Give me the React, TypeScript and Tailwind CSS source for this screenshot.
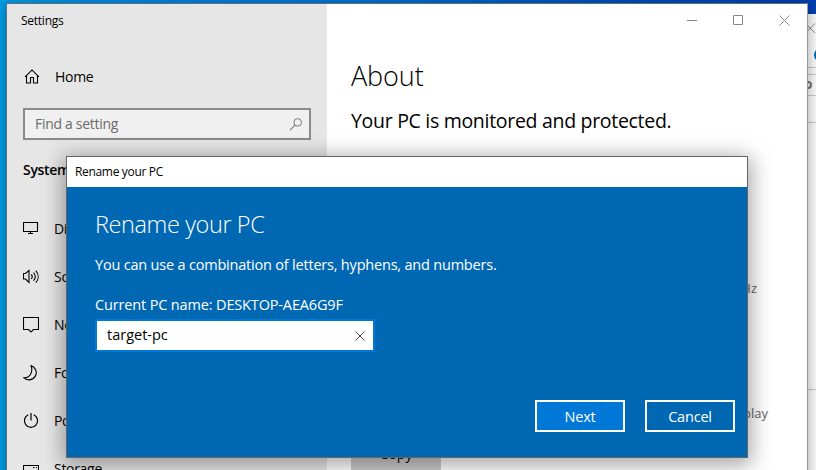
import type { ReactNode } from "react";

function Glyph({ size = 16, children, className = "" }: { size?: number; children: ReactNode; className?: string }) {
  return (
    <svg width={size} height={size} viewBox={`0 0 ${size} ${size}`} fill="none" stroke="currentColor" strokeWidth="1.2" className={`shrink-0 ${className}`}>
      {children}
    </svg>
  );
}

const navItems: { label: string; icon: ReactNode }[] = [
  {
    label: "Display",
    icon: <path d="M.5 1.500h14v9H.5zM5 12.500h5M7.500 10.500v2" strokeWidth="1.100" />,
  },
  {
    label: "Sound",
    icon: <path d="M.5 4.500h2L6 1.500v12l-3.500-3.500h-2zM8.200 5.500c1.200 1.200 1.200 3.200 0 4.500M10.500 3.700c2.200 2.400 2.200 5.600 0 8M12.800 1.700c3.200 3.600 3.200 8.400 0 12" strokeWidth="1.100" />,
  },
  {
    label: "Notifications & actions",
    icon: <path d="M.5.5h15v12h-5L8 15l-2.500-2.500H.5z" strokeWidth="1.100" />,
  },
  {
    label: "Focus assist",
    icon: <path d="M8 .6a7.300 7.300 0 1 1-7.300 12.100C6.500 13.200 10.500 7.500 8 .6z" strokeWidth="1.100" />,
  },
  {
    label: "Power & sleep",
    icon: <path d="M5.200 1.800a6.600 6.600 0 1 0 5.600 0M8 0v7.500" strokeWidth="1.200" />,
  },
  {
    label: "Storage",
    icon: <path d="M.5 4.500h15v9H.5zM10 6.500h1.500M13 6.500h1.500" strokeWidth="1.100" />,
  },
];

function Sidebar() {
  return (
    <aside className="flex w-[320px] shrink-0 flex-col bg-[#e6e6e6] text-sm tracking-[-0.3px]">
      <div className="flex h-[34px] items-center pl-[14px] text-[12px] tracking-[-0.25px]">Settings</div>
      <div className="mt-[22px] flex h-[34px] items-center gap-[15px] pl-[17px]">
        <Glyph>
          <path d="M1 7.800 8 .9l7 6.900M2.500 6.500v7.500h4V8.500h3V14h4V6.500" strokeWidth="1.100" />
        </Glyph>
        <span>Home</span>
      </div>
      <div className="mx-4 mt-[14px] flex h-8 items-center justify-between border-2 border-[#8a8a8a] bg-[#f0f0f0] pl-[10px] pr-[6px] text-[#6b6b6b]">
        <span className="-mt-px">Find a setting</span>
        <Glyph size={15} className="text-[#777]">
          <circle cx="9.700" cy="5.400" r="3.800" strokeWidth="1" />
          <path d="M7 8.200 2 13.200" strokeWidth="1.100" />
        </Glyph>
      </div>
      <div className="mt-[20px] flex h-[20px] items-center pl-4 font-semibold">System</div>
      <nav className="mt-[25px] flex flex-col">
        {navItems.map(({ label, icon }) => (
          <div key={label} className="flex h-12 shrink-0 items-center gap-[15px] pl-4">
            <Glyph>{icon}</Glyph>
            <span className="whitespace-nowrap">{label}</span>
          </div>
        ))}
      </nav>
    </aside>
  );
}

function About() {
  return (
    <main className="flex min-w-0 flex-1 flex-col bg-white">
      <div className="flex h-[32px] justify-end text-[#888]">
        {["M2 7.500h10", "M2.500 2.500h9v9h-9z", "m2.500 2.500 10 10m0-10-10 10"].map((d) => (
          <div key={d} className="flex w-[46px] items-center justify-center">
            <Glyph size={15}>
              <path d={d} strokeWidth="1" />
            </Glyph>
          </div>
        ))}
      </div>
      <h1 className="mt-[21px] pl-6 text-[27px] font-[340] leading-[38px] tracking-[-0.1px]">About</h1>
      <h2 className="mt-[12px] pl-6 text-[19.5px] leading-[28px] tracking-[-0.3px]">Your PC is monitored and protected.</h2>
      <div className="mt-[143px] flex h-5 justify-end pr-[50px] text-[13px] leading-5 text-[#666]">2.50 GHz</div>
      <div className="mt-[105px] flex h-5 justify-end pr-[39px] text-[13px] leading-5 text-[#666]">No pen or touch input is available for this display</div>
      <button className="ml-6 mt-[15px] h-8 w-[90px] shrink-0 bg-[#ccc] text-sm">Copy</button>
    </main>
  );
}

function RenameDialog() {
  return (
    <section className="absolute left-[66px] top-[156px] flex h-[302px] w-[682px] flex-col border border-[#666] bg-[#0067b3] text-[14.5px] tracking-[-0.2px] text-white shadow-[0_4px_20px_3px_rgba(0,0,0,0.36)]">
      <header className="flex h-[30px] shrink-0 items-center bg-white pl-2 text-[12px] tracking-[-0.33px] text-black">Rename your PC</header>
      <div className="flex flex-1 flex-col pl-7 pr-3">
        <h2 className="mt-[19px] text-[23.5px] font-[340] leading-9 tracking-[-0.4px]">Rename your PC</h2>
        <p className="mt-[13px] leading-5">You can use a combination of letters, hyphens, and numbers.</p>
        <p className="mt-5 leading-5 tracking-[-0.15px]">Current PC name: DESKTOP-AEA6G9F</p>
        <div className="mt-1 flex h-[33px] w-[280px] items-center justify-between border-2 border-[#0078d7] bg-white pl-[10px] pr-[6px] text-black">
          <span className="-mt-px leading-5 tracking-normal">target-pc</span>
          <Glyph size={15} className="text-[#444]">
            <path d="m3.500 3.500 9 9m0-9-9 9" strokeWidth="1" />
          </Glyph>
        </div>
        <div className="mt-[48px] flex justify-end gap-5">
          <button className="h-8 w-[90px] border-2 border-white bg-[#0078d7] pt-px leading-5">Next</button>
          <button className="h-8 w-[90px] border-2 border-white pt-px leading-5">Cancel</button>
        </div>
      </div>
    </section>
  );
}

function BackgroundWindow() {
  return (
    <div className="absolute left-[700px] top-[14px] flex h-[480px] w-[130px] flex-col bg-white pl-[104px]">
      <div className="flex h-[29px] items-center text-[#888]">
        <Glyph size={14}>
          <path d="m1.500 1.500 9.500 9.500m0-9.500-9.500 9.500" strokeWidth="1" />
        </Glyph>
      </div>
      <div className="h-[25px] border-b border-[#ccc] pl-[10px] pt-[5px]">
        <div className="size-[14px] rounded-full bg-[#0067b3]" />
      </div>
      <div className="h-[7px] border-b border-[#ccc]" />
      <div className="flex h-[21px] items-center border-b border-[#ccc]">
        <div className="size-2 rounded-full border-2 border-[#777]" />
      </div>
      <div className="h-[27px] border-b border-[#ccc]" />
      <div className="h-[267px] border-b border-[#ccc]" />
    </div>
  );
}

export default function App() {
  return (
    <div className="relative h-[470px] w-[816px] overflow-hidden bg-[linear-gradient(90deg,#00a2ed_0%,#008ee5_12%,#0078d7_43%,#0052bc_75%,#0040b4_100%)] font-['Open_Sans','Noto_Sans',sans-serif] text-black">
      <BackgroundWindow />
      <div className="absolute left-[6px] top-[3px] flex h-[500px] w-[802px] border border-[#5c7080] border-r-[#999] shadow-[0_2px_12px_2px_rgba(0,0,0,0.3)]">
        <Sidebar />
        <About />
      </div>
      <RenameDialog />
    </div>
  );
}
